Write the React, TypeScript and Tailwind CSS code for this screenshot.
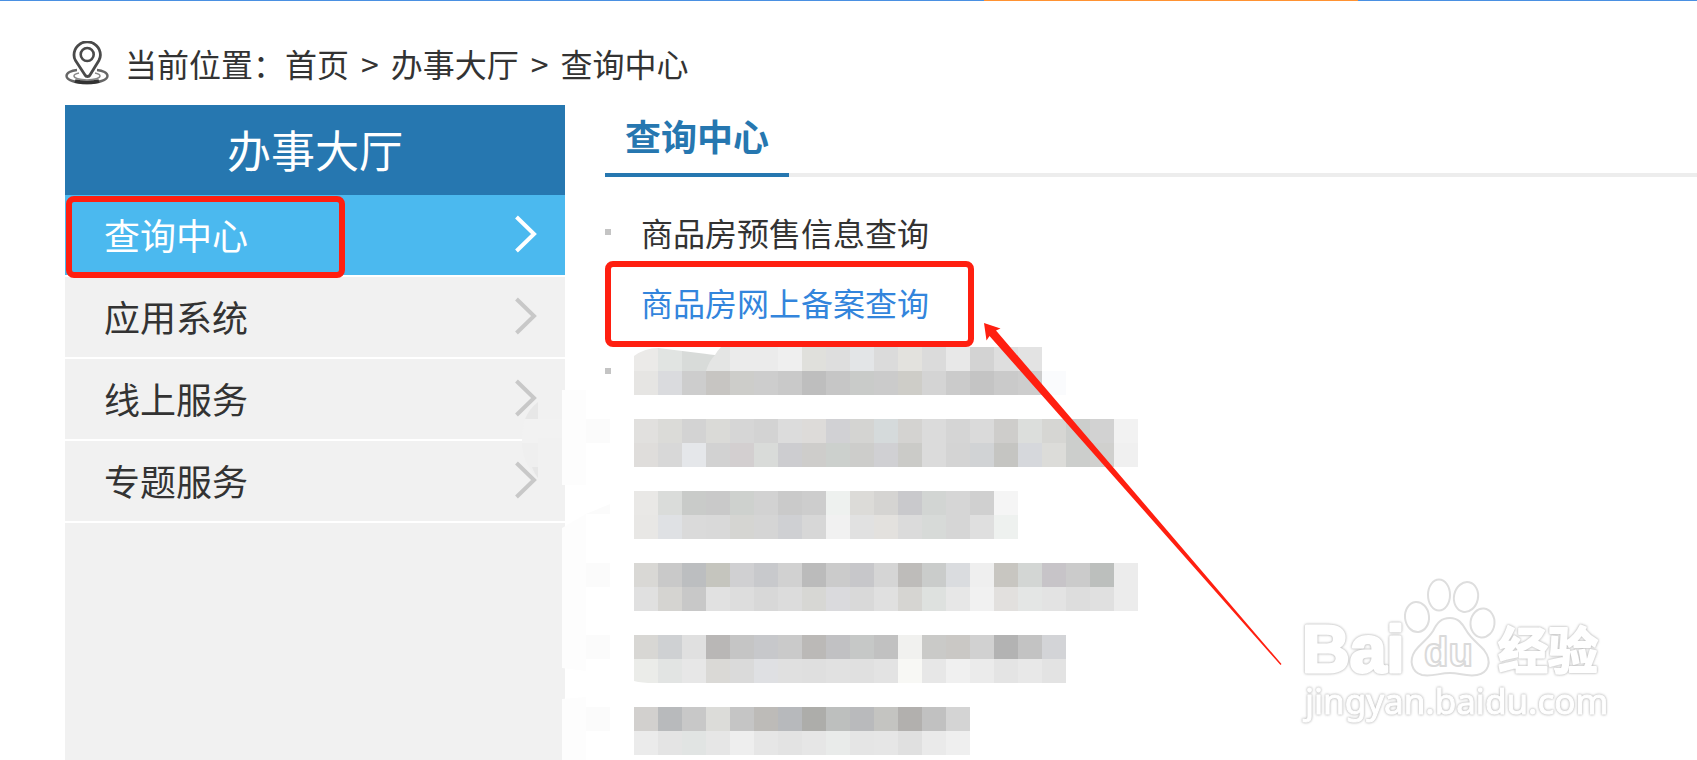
import { useState } from "react";

interface MosaicLine {
  id: number;
  top: string;
  bottom: string;
}

const sideItems = ["查询中心", "应用系统", "线上服务", "专题服务"];

const links = [
  { label: "商品房预售信息查询", marked: false },
  { label: "商品房网上备案查询", marked: true },
];

// one colour per 24px tile, two rows of tiles per censored line
const mosaicLines: MosaicLine[] = [
  {
    id: 1,
    top: "ebeae8 e1e4e2 d8dbd9 e4e5e4 ebebeb ebebeb efefef e0e0dc dedede e3e5e7 dbdbdb e3e2de dbdbdb e8e8e8 d3d3d3 dedede e3e3e3",
    bottom:
      "e6e5e3 dadbde cdcdcd c7c5c2 cdcdca cdcdcd c9c9c9 bebebe c6c6c6 c9cbc9 cbcbcb cecdc8 d4d4d4 cbcbcb c4c4c4 cacaca cdcdcd fafbfd",
  },
  {
    id: 2,
    top: "e1e0de dbdbd8 d3d3d3 dadad7 d6d6d6 d3d3d3 dcdcdc dddbd9 d1d1d4 d4d4d2 d5dadb d4d3d1 dbdbdb d5d5d5 dadada cecdcb dcdedc d6d6d3 cccecc d2d2d2 f2f2f2",
    bottom:
      "dfdddb d8d8d8 e5e7ea d2d2d2 d3cfd0 d9dbd9 cdcdd0 cecdcb ccd0cd cdcdcb d0d0d3 cbcbc8 dbdbdb d4d4d4 d1d3d5 c5c5c2 d6d8dc dcdcd9 cccecc d0d0ce f0f0f0",
  },
  {
    id: 3,
    top: "e9e8e6 dadcda c9cbc9 c9c9c9 ced1ce d2d2d2 cacaca cdcdcd eef1ef dcdbd8 d5d4d2 c9c9cc d2d5d3 d6d6d6 d0d0d0 f5f5f5",
    bottom:
      "e8e7e5 dfe1e4 dadada d9d9d9 d5d5d2 d5d5d5 cfd0d3 d7d7d7 f1f1f1 e1e1e1 e3e1de dbdbdb d7dad8 d6d6d6 dfdfdf eef1ef",
  },
  {
    id: 4,
    top: "d9d8d5 c9c9c9 bcbec0 c5c5be d0d0d2 c8c9cc d1d1d1 bbbbbb cbcbcb c7c7ca d5d5d5 bebcba cacccb dadcdf efefef c8c6c1 d3d6d4 c7c4c8 cbcbcb bcbfbd ececec",
    bottom:
      "e0e0e0 d5d4d1 c8c8c8 e1e1e1 dddddd d8d8d8 dcdcdc d7d7d4 dadadd d9d9d9 e0e0e0 d6d5d2 dee1df e7e7e7 f1f1f1 e2e0de e4e6e5 e3e3e3 dddddd e0e0e0 ececec",
  },
  {
    id: 5,
    top: "d8d7d4 cfd1d3 e0e0e0 b9b7b6 c5c5c5 c7c8cb cacaca bbb9b7 c1c1c3 c6c8c7 c1c1c1 f1f1ef cacac8 cac8c5 d1d1d1 b3b3b3 c3c3c3 d3d4d7",
    bottom:
      "ebece9 e2e4e3 e7e7e7 dad9d6 dadada dfe0e3 e0e0e0 dfdfdf e1e1e1 e0e0e0 e3e3e3 f8f8f5 e7e7e7 f0f0f0 ebebeb e4e4e4 e8e8e8 e3e3e3",
  },
  {
    id: 6,
    top: "d2d0ce b8babc c8c8c8 dcdcd9 c5c5c5 bdbbb8 b7b9bc adadaa bdbfbe b9babc c4c4c1 b2b0ae c1c1c1 d4d4d4",
    bottom:
      "ebebeb e4e4e4 e1e4e3 e6e6e6 eeeeee e6e6e6 e3e3e3 e6e6e6 e9ebea e5e5e5 e6e6e6 e0e0e0 eaeaea efefef",
  },
];

function PinIcon() {
  return (
    <svg
      width="44"
      height="44"
      viewBox="0 0 44 44"
      fill="none"
      stroke="#4a4a4a"
      className="shrink-0"
      aria-hidden="true"
    >
      <path
        d="M12 29C6 29.500 1.500 32 1.500 35c0 4 9 7 20.500 7s20.500-3 20.500-7c0-3-4.500-5.500-10.500-6"
        strokeWidth="2.400"
        stroke="#666"
      />
      <path
        d="M14 32c-3 .6-5 1.700-5 3 0 2.200 5.600 4 13 4s13-1.800 13-4c0-1.300-2-2.400-5-3"
        strokeWidth="1.500"
        stroke="#888"
      />
      <path
        d="M10 40c3.500 1 7.500 1.500 12 1.500s8.500-.5 12-1.500"
        strokeWidth="3.500"
        stroke="#333"
      />
      <path
        d="M20 34 10.500 19.500C9.300 17.600 9 16 9 14a13.200 13.200 0 0 1 26.400 0c0 2-.5 3.700-1.500 5.500L25 34c-1 2-4 2-5 0Z"
        fill="#fff"
        strokeWidth="2.800"
      />
      <circle cx="22.200" cy="13.500" r="6.500" strokeWidth="2.600" />
    </svg>
  );
}

function Chevron({ active }: { active: boolean }) {
  return (
    <svg
      width="24"
      height="38"
      viewBox="0 0 24 38"
      fill="none"
      stroke={active ? "#fff" : "#c8c8c8"}
      strokeWidth="4"
      aria-hidden="true"
    >
      <path d="M3.500 2 21 19 3.500 36" />
    </svg>
  );
}

function Mosaic({ line }: { line: MosaicLine }) {
  const rows = [line.top.split(" "), line.bottom.split(" ")];
  const width = Math.max(rows[0].length, rows[1].length) * 24;

  return (
    <svg width={width} height="48" shapeRendering="crispEdges" aria-hidden="true">
      {rows.map((row, y) =>
        row.map((color, x) => (
          <rect
            key={`${y}-${x}`}
            x={x * 24}
            y={y * 24}
            width="24"
            height="24"
            fill={`#${color}`}
          />
        )),
      )}
      {line.id === 1 && (
        <g shapeRendering="auto">
          <path d="M72 24Q75 14 81 8L72 7Z" fill="#d8dbd9" />
          <path d="M0 0V9Q11 1 24 1L81 8Q84 3 87 0Z" fill="#fff" />
        </g>
      )}
      {line.id === 5 && (
        <path d="M0 46Q8 48 20 48H0Z" fill="#fff" shapeRendering="auto" />
      )}
    </svg>
  );
}

// brush marks left on the right edge of the sidebar
function Smudge() {
  return (
    <svg
      width="90"
      height="370"
      viewBox="0 0 90 370"
      className="absolute top-[285px] left-[520px] pointer-events-none"
      aria-hidden="true"
    >
      <path d="M18 53V88C6 77 2 64 2 53Z" fill="#efefef" />
      <path d="M18 12V29H5Q9 19 18 12Z" fill="#e7e7e7" />
      <path d="M18 88V77H12Q14 83 18 88Z" fill="#e6e6e6" />
      <path d="M5 29H42V53H2Q2 39 5 29Z" fill="#f2f2f2" />
      <rect x="18" y="48" width="28" height="5" fill="#f1f1f1" />
      <path d="M42 0H66V95H42Z" fill="#fdfdfd" />
      <rect x="66" y="29" width="24" height="24" fill="#fbfbfb" />
      <path d="M66 124L90 114V124Z" fill="#fbfbfb" />
      <path d="M42 138L66 124V281L42 278Z" fill="#fdfdfd" />
      <rect x="66" y="173" width="24" height="24" fill="#fbfbfb" />
      <rect x="66" y="245" width="24" height="24" fill="#fbfbfb" />
      <rect x="66" y="317" width="24" height="24" fill="#fbfbfb" />
      <path d="M42 309L66 307V370H42Z" fill="#fdfdfd" />
    </svg>
  );
}

function Arrow() {
  return (
    <svg
      width="300"
      height="344"
      viewBox="0 0 300 344"
      fill="#ff1f10"
      className="absolute top-[217px] left-[378px] pointer-events-none"
      aria-hidden="true"
    >
      <path d="M1 1 17.500 6.500 13 8.500 298.500 342 297.500 343 6.500 14 3.500 18.500Z" />
    </svg>
  );
}

function Watermark() {
  return (
    <svg
      width="330"
      height="160"
      viewBox="0 0 330 160"
      fill="#fff"
      stroke="#fff"
      strokeWidth="3"
      strokeLinejoin="round"
      className="absolute right-[77px] bottom-[30px] overflow-visible pointer-events-none"
      aria-label="Baidu 经验"
    >
      <g stroke="#dedede" strokeWidth="2">
        <ellipse cx="127" cy="47" rx="12" ry="15" transform="rotate(-6 127 47)" />
        <ellipse cx="149" cy="25" rx="11" ry="15.500" />
        <ellipse cx="176" cy="27" rx="12" ry="15" transform="rotate(12 176 27)" />
        <ellipse cx="192.500" cy="53" rx="12" ry="14.500" transform="rotate(6 192.500 53)" />
        <path d="M160 48C168 48 172 53 176 60C181 69 189 74 194 80C203 92 198 103 187 105C177 107 170 103 160 103C149 103 142 107 132 105C121 102 119 90 125 81C129 75 138 69 143 61C147 53 151 48 160 48Z" />
      </g>
      <g className="font-['Liberation_Sans','Noto_Sans_CJK_SC',sans-serif] font-bold">
        <text
          x="12"
          y="102"
          fontSize="66"
          className="[filter:drop-shadow(0_0_1px_#bbb)_drop-shadow(0_0_1px_#ddd)]"
        >
          Bai
        </text>
        <text x="134" y="96" fontSize="40" stroke="#dadada" strokeWidth="2">
          du
        </text>
        <text
          x="208"
          y="99"
          fontSize="50"
          strokeWidth="2"
          className="[filter:drop-shadow(0_0_1px_#bbb)_drop-shadow(0_0_1px_#ddd)]"
        >
          经验
        </text>
      </g>
      <text
        x="15"
        y="144"
        fontSize="35"
        strokeWidth="1"
        className="font-['Noto_Sans',sans-serif] [filter:drop-shadow(0_0_1px_#bbb)_drop-shadow(0_0_1px_#ddd)]"
      >
        jingyan.baidu.com
      </text>
    </svg>
  );
}

export default function App() {
  const [active, setActive] = useState("查询中心");

  return (
    <div className="relative flex min-h-screen flex-col overflow-hidden bg-white font-['Noto_Sans_CJK_SC',sans-serif] text-[#333]">
      <div className="flex h-px bg-[#4a90e2]">
        <div className="w-[58%]" />
        <div className="w-[22%] bg-[#ff9232]" />
      </div>

      <nav className="flex h-[104px] items-center pt-5 pl-[65px] text-[32px] leading-10">
        <PinIcon />
        <span className="ml-4">当前位置：</span>
        <a href="#home">首页</a>
        <span className="mx-3">&gt;</span>
        <a href="#hall">办事大厅</a>
        <span className="mx-3">&gt;</span>
        <a href="#query">查询中心</a>
      </nav>

      <div className="relative flex grow gap-10 pl-[65px]">
        <aside className="w-[500px] shrink-0 bg-[#f1f1f1]">
          <h2 className="flex h-[90px] items-center justify-center bg-[#2677b0] pb-0.5 text-[44px] text-white">
            办事大厅
          </h2>
          <ul>
            {sideItems.map((item) => (
              <li key={item} className="relative border-b-2 border-white">
                <button
                  type="button"
                  onClick={() => setActive(item)}
                  className={`flex h-20 w-full items-center justify-between pr-7 pb-0.5 pl-[39px] text-[36px] ${
                    item === active ? "bg-[#4bb9ef] text-white" : ""
                  }`}
                >
                  {item}
                  <Chevron active={item === active} />
                </button>
                {item === "查询中心" && (
                  <div className="pointer-events-none absolute top-px left-px z-10 h-[82px] w-[279px] rounded-lg border-6 border-[#ff1f10]" />
                )}
              </li>
            ))}
          </ul>
        </aside>
        <Smudge />

        <main className="relative grow">
          <div className="flex border-b-4 border-[#ededed]">
            <h1 className="-mb-1 flex h-[72px] items-center border-b-4 border-[#2677b0] px-5 pb-2 text-[36px] font-bold text-[#2677b0]">
              查询中心
            </h1>
          </div>

          <ul className="pt-[22px] text-[32px]">
            {links.map((link) => (
              <li key={link.label} className="relative flex h-[70px] items-center">
                <span className="mb-1 size-[6px] bg-[#c4c4c4]" />
                <a
                  href="#detail"
                  className={`ml-[30px] pb-1 ${link.marked ? "text-[#3385dc]" : ""}`}
                >
                  {link.label}
                </a>
                {link.marked && (
                  <div className="pointer-events-none absolute -top-2 left-0 h-[86px] w-[369px] rounded-lg border-6 border-[#ff1f10]" />
                )}
              </li>
            ))}
          </ul>

          <ul className="flex flex-col gap-6 pt-2">
            {mosaicLines.map((line) => (
              <li key={line.id} className="flex items-center">
                <span
                  className={`size-[6px] ${line.id === 1 ? "bg-[#c4c4c4]" : ""}`}
                />
                <div className="ml-[23px]">
                  <Mosaic line={line} />
                </div>
              </li>
            ))}
          </ul>

          <Arrow />
        </main>
      </div>

      <Watermark />
    </div>
  );
}
